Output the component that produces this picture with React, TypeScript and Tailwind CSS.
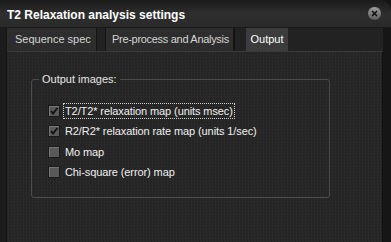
import React from 'react';

const font = { fontFamily: '"Liberation Sans", Arial, sans-serif' };

const texture = 'bg-[#262626] bg-[image:repeating-conic-gradient(#2a2a2a_0_25%,#232323_0_50%)] bg-[length:3px_3px]';

const Check = ({ checked }: { checked: boolean }) => (
  <div className="w-[12px] h-[12px] border border-[#1a1a1a] bg-[#595959] flex items-center justify-center shadow-[inset_1px_1px_0_#767676]">
    {checked && (
      <svg width="10" height="10" viewBox="0 0 10 10">
        <path d="M2 5 L4 7.5 L8.5 2" stroke="#111" strokeWidth="1.8" fill="none" />
      </svg>
    )}
  </div>
);

const items = [
  { label: 'T2/T2* relaxation map (units msec)', checked: true, focus: true },
  { label: 'R2/R2* relaxation rate map (units 1/sec)', checked: true },
  { label: 'Mo map', checked: false },
  { label: 'Chi-square (error) map', checked: false },
];

const App = () => {
  return (
    <div className="w-[391px] h-[242px] bg-[#141414] overflow-hidden text-[11px]" style={font}>
      <div className="h-full flex flex-col rounded-tr-[12px] overflow-hidden bg-[#262626]">
        {/* title bar */}
        <div className="h-[28px] shrink-0 flex items-center justify-between pl-[7px] pr-[9px] bg-gradient-to-b from-[#1a1a1a] via-[#2e2e2e] to-[#2a2a2a] border-b border-[#1a1a1a]">
          <span className="font-bold text-white text-[12px] mt-[2px]">T2 Relaxation analysis settings</span>
          <div className="w-[15px] h-[15px] rounded-full bg-gradient-to-b from-[#a0a0a0] to-[#5c5c5c] border border-[#2a2a2a] flex items-center justify-center mb-[1px]">
            <svg width="7" height="7" viewBox="0 0 7 7">
              <path d="M1 1 L6 6 M6 1 L1 6" stroke="#111" strokeWidth="1.6" />
            </svg>
          </div>
        </div>

        <div className="flex-1 flex">
          <div className="w-[7px] bg-[#1c1c1c] border-r border-[#141414]" />
          <div className="flex-1 flex flex-col">
            {/* tabs */}
            <div className="h-[24px] flex items-stretch border-b border-[#3a3a3a] bg-[#222] whitespace-nowrap">
              <div className="w-[90px] flex items-center pl-[8px] text-[#d4d4d4] bg-[#2d2d2d] border-r border-[#151515]">Sequence spec</div>
              <div className="w-[9px] border-r border-[#151515]" />
              <div className="w-[128px] flex items-center pl-[6px] tracking-[-0.3px] text-[#d4d4d4] bg-[#2d2d2d] border-r border-[#151515]">Pre-process and Analysis</div>
              <div className="w-[12px] border-l border-[#151515]" />
              <div className="w-[42px] flex items-center justify-center text-white bg-[#3c3c3c]">Output</div>
            </div>
            {/* panel */}
            <div className={`flex-1 pl-[24px] pt-[27px] border-r border-[#101010] ${texture}`}>
              <div className="relative w-[299px] h-[119px] border border-[#4c4c4c] rounded-[3px]">
                <span className="absolute -top-[9px] left-[7px] px-[3px] bg-[#262626] text-[#e6e6e6] leading-[16px]">Output images:</span>
                <div className="pt-[25px] pl-[16px] flex flex-col gap-[8px]">
                  {items.map((it) => (
                    <div key={it.label} className="flex items-center gap-[4px] h-[12.3px]">
                      <Check checked={it.checked} />
                      <span className={`text-[#f0f0f0] leading-[14px] px-[1px] tracking-[-0.1px] ${it.focus ? 'outline outline-1 outline-dotted outline-[#d0d0d0]' : ''}`}>{it.label}</span>
                    </div>
                  ))}
                </div>
              </div>
            </div>
          </div>
          <div className="w-[8px] bg-[#161616]" />
        </div>
      </div>
    </div>
  );
};

export default App;
